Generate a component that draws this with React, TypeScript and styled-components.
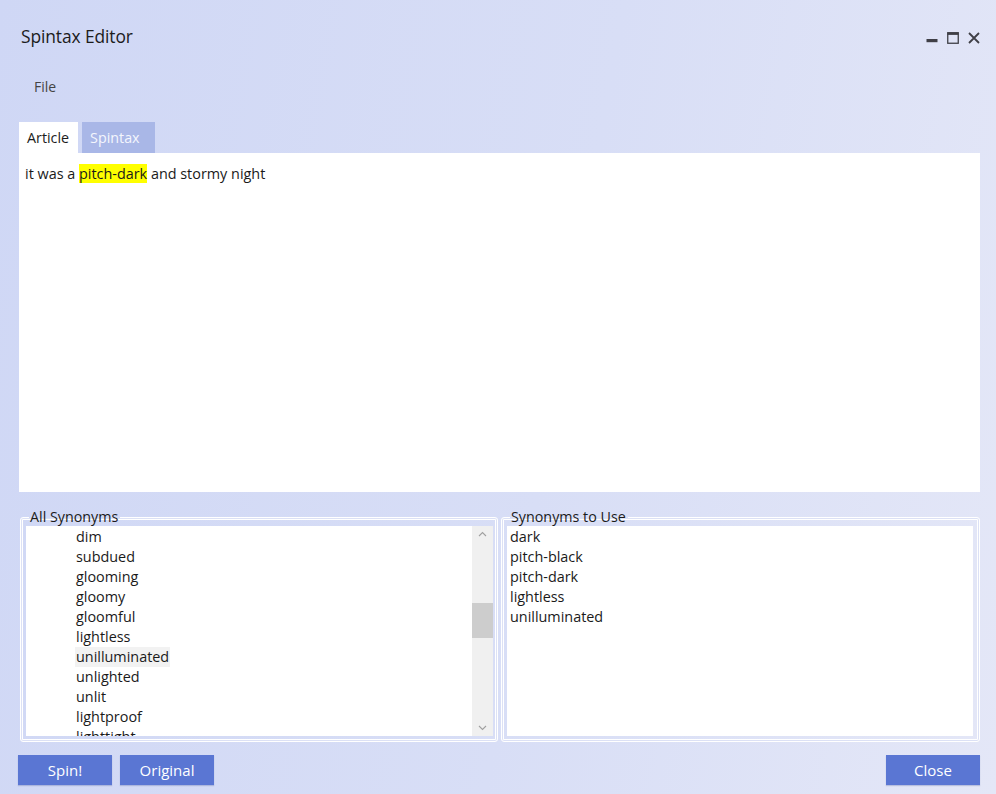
import styled, { createGlobalStyle } from 'styled-components';

const allSynonyms = [
  'dim',
  'subdued',
  'glooming',
  'gloomy',
  'gloomful',
  'lightless',
  'unilluminated',
  'unlighted',
  'unlit',
  'lightproof',
  'lighttight',
];

const usedSynonyms = ['dark', 'pitch-black', 'pitch-dark', 'lightless', 'unilluminated'];

const GlobalStyle = createGlobalStyle`
  html, body {
    margin: 0;
    padding: 0;
  }
  body {
    font-family: "Open Sans", "Noto Sans", sans-serif;
    color: #1a1a1a;
  }
`;

const Window = styled.div`
  width: 996px;
  height: 794px;
  box-sizing: border-box;
  background: linear-gradient(100deg, #cfd7f5 0%, #d8def6 55%, #e4e7f7 100%);
  display: flex;
  flex-direction: column;
  padding: 0 16px 9px 18px;
  overflow: hidden;
`;

const TitleBar = styled.div`
  display: flex;
  align-items: center;
  justify-content: space-between;
  height: 72px;
  padding-left: 3px;
`;

const Title = styled.h1`
  margin: 0;
  font-size: 17.4px;
  font-weight: 400;
  color: #1c1c1c;
  letter-spacing: -0.1px;
`;

const Controls = styled.div`
  display: flex;
  align-items: center;
  gap: 9px;
  padding-top: 4px;
  color: #3f3f46;
`;

const Menu = styled.div`
  height: 50px;
  display: flex;
  align-items: center;
  padding-left: 16px;
  padding-bottom: 21px;
  box-sizing: border-box;
  font-size: 14px;
  color: #444;
`;

const Tabs = styled.div`
  display: flex;
  gap: 4px;
  padding-left: 1px;
`;

const Tab = styled.div<{ $active?: boolean }>`
  height: 31px;
  padding: 0 9px 0 8px;
  display: flex;
  align-items: center;
  font-size: 14.3px;
  background: ${({ $active }) => ($active ? '#ffffff' : '#a9b7e7')};
  color: ${({ $active }) => ($active ? '#1c1c1c' : '#f4f6fd')};
  min-width: ${({ $active }) => ($active ? '42px' : '56px')};
`;

const Editor = styled.div`
  height: 339px;
  margin-left: 1px;
  background: #ffffff;
  padding: 11px 6px;
  box-sizing: border-box;
  font-size: 14.4px;
  line-height: 20px;
`;

const Mark = styled.span`
  background: #ffff00;
`;

const Groups = styled.div`
  display: grid;
  grid-template-columns: 478px 479px;
  gap: 3px;
  margin-top: 18px;
  margin-left: 2px;
`;

const Group = styled.fieldset<{ $right?: boolean }>`
  margin: 0;
  padding: 2px ${({ $right }) => ($right ? '6px' : '4px')} 5px 5px;
  height: 232px;
  box-sizing: border-box;
  border: 1px solid #ffffff;
  border-radius: 3px;
  box-shadow: inset 0 0 0 1px #dce1f5, inset 0 0 0 2px #ffffff;
  min-width: 0;
  display: flex;
`;

const Legend = styled.legend`
  padding: 0 2px 0 1px;
  margin-left: 3px;
  font-size: 14.3px;
  line-height: 14px;
  color: #1c1c1c;
`;

const ListBox = styled.div`
  flex: 1;
  background: #ffffff;
  display: flex;
  overflow: hidden;
`;

const Items = styled.ul<{ $indent: number }>`
  list-style: none;
  margin: 0;
  padding: 1px 0 0 ${({ $indent }) => $indent}px;
  flex: 1;
  overflow: hidden;
  font-size: 14.4px;
  line-height: 20px;
`;

const Item = styled.li<{ $hover?: boolean }>`
  span {
    display: inline-block;
    padding: 0 1px;
    background: ${({ $hover }) => ($hover ? '#f2f2f2' : 'transparent')};
  }
`;

const ScrollBar = styled.div`
  width: 21px;
  background: #f0f0f0;
  display: flex;
  flex-direction: column;
  align-items: center;
  justify-content: space-between;
  position: relative;
  padding: 5px 0;
  box-sizing: border-box;
`;

const Thumb = styled.div`
  position: absolute;
  left: 0;
  right: 0;
  top: 77px;
  height: 35px;
  background: #cdcdcd;
`;

const Footer = styled.div`
  display: flex;
  align-items: center;
  justify-content: space-between;
  margin-top: 13px;
`;

const ButtonRow = styled.div`
  display: flex;
  gap: 8px;
`;

const Button = styled.button`
  width: 94px;
  height: 30px;
  border: none;
  background: #5a76d3;
  color: #ffffff;
  font-family: inherit;
  font-size: 15px;
  padding: 0 0 1px;
  box-shadow: 0 1px 1px rgba(60, 80, 150, 0.25);
`;

const Chevron = ({ up }: { up?: boolean }) => (
  <svg width="9" height="6" viewBox="0 0 9 6">
    <path
      d={up ? 'M1 5 L4.5 1.5 L8 5' : 'M1 1 L4.5 4.5 L8 1'}
      fill="none"
      stroke="#a0a0a0"
      strokeWidth="1.1"
    />
  </svg>
);

const App = () => {
  return (
    <>
      <GlobalStyle />
      <Window>
        <TitleBar>
          <Title>Spintax Editor</Title>
          <Controls>
            <svg width="12" height="12" viewBox="0 0 12 12">
              <rect x="0.5" y="7" width="11" height="3.2" fill="#3f3f46" />
            </svg>
            <svg width="12" height="12" viewBox="0 0 12 12">
              <rect x="0.75" y="0.75" width="10.5" height="10.5" fill="none" stroke="#3f3f46" strokeWidth="1.3" />
              <rect x="0.5" y="0.5" width="11" height="2.4" fill="#3f3f46" />
            </svg>
            <svg width="12" height="12" viewBox="0 0 12 12">
              <path d="M1 1 L11 11 M11 1 L1 11" stroke="#3f3f46" strokeWidth="1.8" />
            </svg>
          </Controls>
        </TitleBar>
        <Menu>File</Menu>
        <Tabs>
          <Tab $active>Article</Tab>
          <Tab>Spintax</Tab>
        </Tabs>
        <Editor>
          it was a <Mark>pitch-dark</Mark> and stormy night
        </Editor>
        <Groups>
          <Group>
            <Legend>All Synonyms</Legend>
            <ListBox>
              <Items $indent={49}>
                {allSynonyms.map((word) => (
                  <Item key={word} $hover={word === 'unilluminated'}>
                    <span>{word}</span>
                  </Item>
                ))}
              </Items>
              <ScrollBar>
                <Chevron up />
                <Thumb />
                <Chevron />
              </ScrollBar>
            </ListBox>
          </Group>
          <Group $right>
            <Legend>Synonyms to Use</Legend>
            <ListBox>
              <Items $indent={2}>
                {usedSynonyms.map((word) => (
                  <Item key={word}>
                    <span>{word}</span>
                  </Item>
                ))}
              </Items>
            </ListBox>
          </Group>
        </Groups>
        <Footer>
          <ButtonRow>
            <Button>Spin!</Button>
            <Button>Original</Button>
          </ButtonRow>
          <Button>Close</Button>
        </Footer>
      </Window>
    </>
  );
};

export default App;
